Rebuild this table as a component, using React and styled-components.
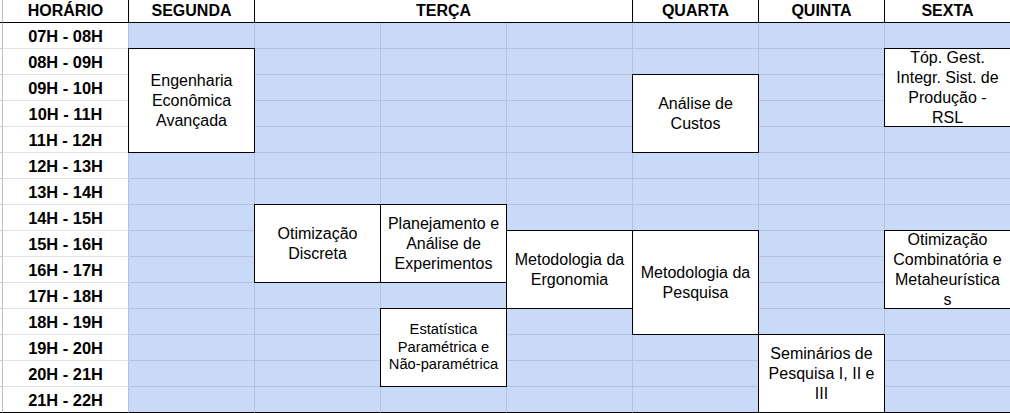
import React from 'react';
import styled, { createGlobalStyle } from 'styled-components';

const GlobalStyle = createGlobalStyle`
  html, body {
    margin: 0;
    padding: 0;
    background: #fff;
    overflow: hidden;
  }
  body {
    font-family: 'Liberation Sans', Arial, sans-serif;
    color: #000;
  }
`;

const pad = n => String(n).padStart(2, '0');
const HOURS = Array.from({ length: 15 }, (_, i) => 7 + i);

// day columns: 0 SEGUNDA, 1-3 TERÇA, 4 QUARTA, 5 QUINTA, 6 SEXTA
const DAYS = [
  { name: 'SEGUNDA', col: 0, span: 1 },
  { name: 'TERÇA', col: 1, span: 3 },
  { name: 'QUARTA', col: 4, span: 1 },
  { name: 'QUINTA', col: 5, span: 1 },
  { name: 'SEXTA', col: 6, span: 1 },
];

const CLASSES = [
  { col: 0, from: 8, to: 12, lines: ['Engenharia', 'Econômica', 'Avançada'] },
  { col: 1, from: 14, to: 17, lines: ['Otimização', 'Discreta'] },
  { col: 2, from: 14, to: 17, lines: ['Planejamento e', 'Análise de', 'Experimentos'] },
  { col: 3, from: 15, to: 18, lines: ['Metodologia da', 'Ergonomia'] },
  { col: 2, from: 18, to: 21, lines: ['Estatística', 'Paramétrica e', 'Não-paramétrica'], small: true },
  { col: 4, from: 9, to: 12, lines: ['Análise de', 'Custos'] },
  { col: 4, from: 15, to: 19, lines: ['Metodologia da', 'Pesquisa'] },
  { col: 5, from: 19, to: 22, lines: ['Seminários de', 'Pesquisa I, II e', 'III'] },
  { col: 6, from: 8, to: 11, lines: ['Tóp. Gest.', 'Integr. Sist. de', 'Produção -', 'RSL'] },
  { col: 6, from: 15, to: 18, lines: ['Otimização', 'Combinatória e', 'Metaheurística', 's'] },
];

const GRID = '#b3c2df';
const FILL = '#c9daf8';

const Sheet = styled.div`
  display: grid;
  grid-template-columns: 3px repeat(8, 126px);
  grid-template-rows: 23px repeat(15, 26px);
  width: 1011px;
`;

const Cell = styled.div`
  grid-row: ${p => p.$row};
  grid-column: ${p => p.$col};
  box-sizing: border-box;
`;

const HeadCell = styled(Cell)`
  background: #fff;
  border-right: 1px solid ${p => (p.$edge ? '#c0c0c0' : '#000')};
  border-bottom: 1px solid #000;
  display: flex;
  align-items: center;
  justify-content: center;
  font-size: 16px;
  font-weight: bold;
`;

const EdgeCell = styled(Cell)`
  background: #fff;
  border-right: 1px solid #c0c0c0;
  border-bottom: 1px solid ${p => (p.$last ? '#000' : '#c8c8c8')};
`;

const TimeCell = styled(Cell)`
  background: #fff;
  border-right: 1px solid ${GRID};
  border-bottom: 1px solid ${p => (p.$last ? '#000' : '#e3e3e3')};
  display: flex;
  align-items: center;
  justify-content: center;
  font-size: 16.4px;
  font-weight: bold;
  padding-top: 1px;
`;

const SlotCell = styled(Cell)`
  background: ${FILL};
  border-right: 1px solid ${GRID};
  border-bottom: 1px solid ${p => (p.$last ? '#000' : GRID)};
`;

const ClassBox = styled(Cell)`
  margin: -1px 0 0 -1px;
  border: 1px solid #000;
  background: #fff;
  z-index: 1;
  display: flex;
  flex-direction: column;
  justify-content: center;
  align-items: center;
  padding: 0 3px;
  text-align: center;
  white-space: nowrap;
  font-size: ${p => (p.$small ? '14.7px' : '16px')};
  line-height: ${p => (p.$small ? '17.5px' : '20px')};
`;

const Line = styled.span`
  display: block;
`;

const App = () => {
  return (
    <>
      <GlobalStyle />
      <Sheet>
        <HeadCell $row={1} $col={1} $edge />
        <HeadCell $row={1} $col={2}>HORÁRIO</HeadCell>
        {DAYS.map(d => (
          <HeadCell key={d.name} $row={1} $col={`${d.col + 3} / span ${d.span}`}>
            {d.name}
          </HeadCell>
        ))}

        {HOURS.map((h, i) => {
          const row = i + 2;
          const last = i === HOURS.length - 1;
          return (
            <React.Fragment key={h}>
              <EdgeCell $row={row} $col={1} $last={last} />
              <TimeCell $row={row} $col={2} $last={last}>
                {`${pad(h)}H - ${pad(h + 1)}H`}
              </TimeCell>
              {Array.from({ length: 7 }, (_, c) => (
                <SlotCell key={c} $row={row} $col={c + 3} $last={last} />
              ))}
            </React.Fragment>
          );
        })}

        {CLASSES.map((c, i) => (
          <ClassBox
            key={i}
            $row={`${c.from - 5} / ${c.to - 5}`}
            $col={c.col + 3}
            $small={c.small}
          >
            {c.lines.map(l => (
              <Line key={l}>{l}</Line>
            ))}
          </ClassBox>
        ))}
      </Sheet>
    </>
  );
};

export default App;
